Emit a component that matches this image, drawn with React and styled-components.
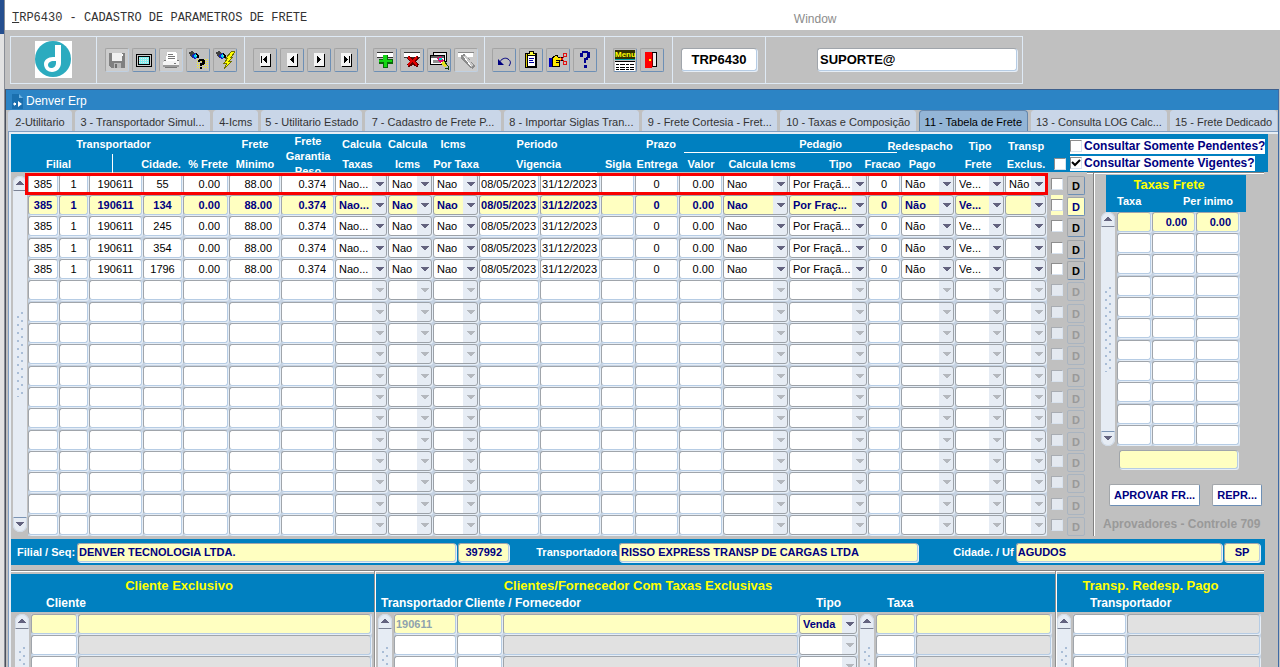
import React from "react";
import styled, { createGlobalStyle, css } from "styled-components";

//data
const tabs = [
  { label: "2-Utilitario", size: 63 },
  { label: "3 - Transportador Simul...", size: 136 },
  { label: "4-Icms", size: 44 },
  { label: "5 - Utilitario Estado", size: 101 },
  { label: "7 - Cadastro de Frete P...", size: 136 },
  { label: "8 - Importar Siglas Tran...", size: 136 },
  { label: "9 - Frete Cortesia - Fret...", size: 136 },
  { label: "10 - Taxas e Composição", size: 136 },
  { label: "11 - Tabela de Frete", size: 109, active: true },
  { label: "13 - Consulta LOG Calc...", size: 137 },
  { label: "15 - Frete Dedicado", size: 107 },
];

const freteColumns = [
  { name: "Filial", width: 31, align: "center" },
  { name: "Sequencia", width: 30, align: "center" },
  { name: "Transportador", width: 54, align: "center" },
  { name: "Cidade", width: 40, align: "center" },
  { name: "% Frete", width: 46, align: "right" },
  { name: "Frete Minimo", width: 52, align: "right" },
  { name: "Frete Garantia Peso", width: 54, align: "right" },
  { name: "Calcula Taxas", width: 53, select: true },
  { name: "Calcula Icms", width: 45, select: true },
  { name: "Icms Por Taxa", width: 46, select: true },
  { name: "Vigencia inicial", width: 61 },
  { name: "Vigencia final", width: 61 },
  { name: "Sigla", width: 34 },
  { name: "Prazo Entrega", width: 44, align: "center" },
  { name: "Pedagio Valor", width: 44, align: "right" },
  { name: "Pedagio Calcula Icms", width: 66, select: true },
  { name: "Pedagio Tipo", width: 79, select: true },
  { name: "Pedagio Fracao", width: 33, align: "center" },
  { name: "Redespacho Pago", width: 54, select: true },
  { name: "Tipo Frete", width: 50, select: true },
  { name: "Transp Exclusivo", width: 42, select: true },
];

const freteRow = (cidade, exclusivo, fracao = "Por Fraçã...") => [
  "385", "1", "190611", cidade, "0.00", "88.00", "0.374",
  "Nao...", "Nao", "Nao", "08/05/2023", "31/12/2023", "", "0", "0.00",
  "Nao", fracao, "0", "Não", "Ve...", exclusivo,
];

const freteRows = [
  freteRow("55", "Não"),
  freteRow("134", "", "Por Fraç..."),
  freteRow("245", ""),
  freteRow("354", ""),
  freteRow("1796", ""),
  ...Array.from({ length: 12 }, () => null),
];

const taxaColumns = [
  { name: "Taxa", width: 35 },
  { name: "Percentual", width: 44, align: "right" },
  { name: "Minimo", width: 44, align: "right" },
];

const clienteColumns = [
  { name: "Cliente", width: 47 },
  { name: "Nome do cliente", width: 294, locked: true },
];

const fornecedorColumns = [
  { name: "Transportador", width: 63 },
  { name: "Cliente / Fornecedor", width: 46 },
  { name: "Nome do fornecedor", width: 296, locked: true },
  { name: "Tipo", width: 59, select: true },
];

const taxaExclusivaColumns = [
  { name: "Taxa", width: 40 },
  { name: "Descricao da taxa", width: 136, locked: true },
];

const redespachoColumns = [
  { name: "Transportador", width: 54 },
  { name: "Nome do transportador", width: 134, locked: true },
];

function ScrollBar() {
  return (
    <ScrollTrack>
      <ScrollButton aria-label="Subir" $up>
        <svg width="8" height="5" viewBox="0 0 8 5" shapeRendering="crispEdges">
          <path d="M3 0h2v1h1v1h1v1h1v1H0V3h1V2h1V1h1z" fill="#63637f" />
        </svg>
      </ScrollButton>
      <Grip />
      <ScrollButton aria-label="Descer">
        <svg width="8" height="5" viewBox="0 0 8 5" shapeRendering="crispEdges">
          <path d="M0 0h8v1H7v1H6v1H5v1H3V3H2V2H1V1H0z" fill="#63637f" />
        </svg>
      </ScrollButton>
    </ScrollTrack>
  );
}

function GridCell({ column, value, current, off, faded }) {
  return (
    <Cell>
      {column.select ? (
        <CellSelect
          aria-label={column.name}
          defaultValue={value}
          disabled={off}
          $current={current}
        >
          <option>{value}</option>
        </CellSelect>
      ) : (
        <CellInput
          aria-label={column.name}
          defaultValue={value}
          $align={column.align}
          $current={current}
          $locked={column.locked}
          $faded={faded}
        />
      )}
    </Cell>
  );
}

function SimpleGrid({ label, columns, rows, current = 0, faded }) {
  return (
    <GridTable aria-label={label}>
      <colgroup>
        {columns.map((column) => (
          <Col key={column.name} $width={column.width} />
        ))}
      </colgroup>
      <tbody>
        {rows.map((row, i) => (
          <GridRow key={i}>
            {columns.map((column, c) => (
              <GridCell
                key={column.name}
                column={column}
                value={row ? row[c] : ""}
                current={i === current}
                off={!row}
                faded={faded && !column.select}
              />
            ))}
          </GridRow>
        ))}
      </tbody>
    </GridTable>
  );
}

function FreteGrid() {
  return (
    <FreteWrapper>
      <GridTable aria-label="Tabela de Frete">
        <colgroup>
          {freteColumns.map((column) => (
            <Col key={column.name} $width={column.width} />
          ))}
          <Col $width={20} />
          <Col $width={20} />
        </colgroup>
        <thead>
          <tr>
            <Head colSpan={4} $indent={16}><span>Transportador</span></Head>
            <Head />
            <Head><span>Frete</span></Head>
            <Head rowSpan={2}>
              <Stacked>Frete Garantia Peso</Stacked>
            </Head>
            <Head><span>Calcula</span></Head>
            <Head $trim={6}><span>Calcula</span></Head>
            <Head $trim={6}><span>Icms</span></Head>
            <Head colSpan={2} $trim={6}><span>Periodo</span></Head>
            <Head />
            <Head $indent={8}><span>Prazo</span></Head>
            <Head colSpan={4} $indent={4}>
              <Underlined $indent={60}>Pedagio</Underlined>
            </Head>
            <Head $low $trim={16}><span>Redespacho</span></Head>
            <Head $low><span>Tipo</span></Head>
            <Head $low><span>Transp</span></Head>
            <Head />
            <Head rowSpan={2}>
              <Filters>
                <Filter>
                  <Tick type="checkbox" />
                  Consultar Somente Pendentes?
                </Filter>
                <Filter>
                  <Tick type="checkbox" defaultChecked />
                  Consultar Somente Vigentes?
                </Filter>
              </Filters>
            </Head>
          </tr>
          <tr>
            <Head colSpan={2}><span>Filial</span></Head>
            <Head><Divider /></Head>
            <Head $trim={4}><span>Cidade.</span></Head>
            <Head $indent={4}><span>% Frete</span></Head>
            <Head><span>Minimo</span></Head>
            <Head $trim={8}><span>Taxas</span></Head>
            <Head $trim={6}><span>Icms</span></Head>
            <Head><span>Por Taxa</span></Head>
            <Head colSpan={2}><Underlined>Vigencia</Underlined></Head>
            <Head><span>Sigla</span></Head>
            <Head><span>Entrega</span></Head>
            <Head><span>Valor</span></Head>
            <Head $indent={12}><span>Calcula Icms</span></Head>
            <Head $indent={24}><span>Tipo</span></Head>
            <Head $trim={4}><span>Fracao</span></Head>
            <Head $trim={12}><span>Pago</span></Head>
            <Head $trim={4}><span>Frete</span></Head>
            <Head><span>Exclus.</span></Head>
            <Head $indent={7}>
              <Tick type="checkbox" aria-label="Marcar todos" />
            </Head>
          </tr>
        </thead>
        <tbody>
          {freteRows.map((row, i) => (
            <GridRow key={i}>
              {freteColumns.map((column, c) => (
                <GridCell
                  key={column.name}
                  column={column}
                  value={row ? row[c] : ""}
                  current={i === 1}
                  off={!row}
                />
              ))}
              <TickCell $current={i === 1}>
                <Tick type="checkbox" aria-label="Marcar linha" disabled={!row} />
              </TickCell>
              <TickCell>
                <DetailButton disabled={!row} $current={i === 1}>D</DetailButton>
              </TickCell>
            </GridRow>
          ))}
        </tbody>
      </GridTable>
      <Highlight />
    </FreteWrapper>
  );
}

//icons
const Icon = ({ children }) => (
  <svg width="20" height="20" viewBox="0 0 20 20" shapeRendering="crispEdges">
    {children}
  </svg>
);

const SaveIcon = () => (
  <Icon>
    <path d="M2 3h16v15H4l-2-2z" fill="#808080" />
    <path d="M5 3h10v8H5z" fill="#f0f0f0" />
    <path d="M15 4h1v2h-1z" fill="#fff" />
    <path d="M7 13h7v5H7z" fill="#b8b8b8" />
    <path d="M8 14h2v4H8z" fill="#707070" />
  </Icon>
);

const ScreenIcon = () => (
  <Icon>
    <rect x="2" y="4" width="16" height="13" fill="#000" />
    <rect x="3" y="5" width="14" height="11" fill="#c8c8c8" />
    <rect x="4" y="6" width="12" height="9" fill="#000" />
    <rect x="5" y="7" width="10" height="7" fill="#7ff0f0" />
    <path d="M5 8.500h10M5 10.500h10M5 12.500h10" stroke="#f4dede" strokeDasharray="1 1" />
  </Icon>
);

const PrintIcon = () => (
  <Icon>
    <path d="M6 2h8l2 2v7H5z" fill="#fff" />
    <path d="M7 4.500h5M7 6.500h7M7 8.500h7" stroke="#777" />
    <path d="M3 11h15v4H2v-3z" fill="#f4f4f4" />
    <path d="M2 15h16v2H2z" fill="#9a9a9a" />
    <path d="M3 10.500h2M16 10.500h2M4 17.500h12" stroke="#777" />
    <path d="M13 13h2v1h-2z" fill="#777" />
  </Icon>
);

const Torch = () => (
  <>
    <path d="M1 2l3-1 3 2 2 2-5 3-2-2z" fill="#404040" />
    <path d="M3 6l5-3 1 5-3 1z" fill="#1020c8" />
    <path d="M5 6l3-2 1 3-2 1z" fill="#00d8e8" />
    <path d="M8 2l3 4v2H9z" fill="#000" />
  </>
);

const EnterQueryIcon = () => (
  <Icon>
    <Torch />
    <path d="M9 9.500h11M9 11.500h11M9 13.500h11M9 15.500h11M9 17.500h11" stroke="#f4ec30" strokeDasharray="1 1" />
    <path d="M10 11v-1h1V9h5v1h1v4h-1v1h-2v1h-2v-3h2v-2h-2v1h-2zM12 17h2v2h-2z" fill="#000" />
  </Icon>
);

const ExecuteQueryIcon = () => (
  <Icon>
    <Torch />
    <path d="M17 1l-6 7h2l-4 5h3l-3 6 8-8h-3l4-4h-2l4-5z" fill="#ffff00" stroke="#707000" />
  </Icon>
);

const RecordIcon = ({ bar, left }) => (
  <Icon>
    <path d="M6 4h10v13H6z" fill="#000" />
    <path d="M5 3h10v13H5z" fill="#f4f4f4" />
    <path d={left ? "M12 6v7h-1v-1h-1v-1H9v-1H8V9h1V8h1V7h1V6z" : "M8 6v7h1v-1h1v-1h1v-1h1V9h-1V8h-1V7H9V6z"} fill="#000" />
    {bar && <path d={left ? "M6 6h1v7H6z" : "M13 6h1v7h-1z"} fill="#000" />}
  </Icon>
);

const InsertIcon = () => (
  <Icon>
    <path d="M2 3h16v4H2z" fill="#fff" />
    <path d="M2 2.500h16M2 7.500h16" stroke="#333" />
    <path d="M8 5h5v4h5v5h-5v4H8v-4H4V9h4z" fill="#086808" />
    <path d="M8 5h4v5h5v2h-5v5H9v-5H4v-2h4z" fill="#14d814" />
  </Icon>
);

const RemoveIcon = () => (
  <Icon>
    <path d="M2 3h16v4H2z" fill="#fff" />
    <path d="M2 2.500h16M2 7.500h16" stroke="#333" />
    <path d="M6 7l10 9M16 7L6 16" stroke="#600000" strokeWidth="4" />
    <path d="M6 7l9 8M15 7l-9 8" stroke="#e00000" strokeWidth="2" />
  </Icon>
);

const LockIcon = () => (
  <Icon>
    <path d="M4.500 2.500h13v9h-13z" fill="#eee" stroke="#000" />
    <path d="M1.500 5.500h14v9h-14z" fill="#fff" stroke="#000" />
    <path d="M2 6h13v2H2z" fill="#606060" />
    <path d="M4 10h7v3H4z" fill="#909090" />
    <path d="M8 8l4-2 3 5-4 2z" fill="#e01070" />
    <path d="M10 8h3v2h-3z" fill="#00d8d0" />
    <path d="M12 13l3-2 3 4-2 3z" fill="#e8e020" />
    <path d="M15 11l4 5v3l-3-1" fill="none" stroke="#104010" />
  </Icon>
);

const ClearIcon = () => (
  <Icon>
    <path d="M2 3h15v4H2z" fill="#fff" />
    <path d="M2 2.500h16" stroke="#888" />
    <path d="M5 5l4-1 10 12-2 3-3-1-9-9z" fill="#8c8c8c" />
    <path d="M7 6l3-1 7 10-2 2z" fill="#c8c8c8" />
    <path d="M8 7l7 9" stroke="#fff" />
  </Icon>
);

const UndoIcon = () => (
  <svg width="20" height="20" viewBox="0 0 20 20">
    <path d="M5 13c2-4 6-6 9-4 3 2 3 4 1 7" fill="none" stroke="#000080" strokeWidth="1" />
    <path d="M4 9v6h6z" fill="#000080" />
  </svg>
);

const ClipboardIcon = () => (
  <Icon>
    <path d="M4.500 3.500h11v14h-11z" fill="#d8c800" stroke="#000" />
    <path d="M6 5h8v11H6z" fill="#fff" stroke="#000" />
    <path d="M8 1h4v2h2v2H6V3h2z" fill="#ffff40" stroke="#000" />
    <path d="M8 8.500h5M8 10.500h4M8 12.500h5" stroke="#0000a0" />
  </Icon>
);

const CutIcon = () => (
  <Icon>
    <path d="M1 8h3v9H1z" fill="#0000c0" />
    <path d="M4 8l5-3 1 2h4v3h-3v6H4z" fill="#ffe800" stroke="#000" />
    <path d="M8 10.500h4M8 12.500h4" stroke="#000" />
    <circle cx="17" cy="5" r="2" fill="none" stroke="#e01010" />
    <circle cx="17" cy="13" r="2" fill="none" stroke="#e01010" />
    <path d="M12 7l4 4M12 11l4-4" stroke="#e01010" />
  </Icon>
);

const HelpIcon = () => (
  <Icon>
    <path d="M5 7V3h2V1h6v1h2v6h-2v2h-2v3H9V8h2V7h1V3H8v4zM9 15h3v3H9z" fill="#000090" />
  </Icon>
);

const MenuIcon = () => (
  <svg width="22" height="22" viewBox="0 0 22 22">
    <path d="M1 1h20v9H1z" fill="#303000" />
    <text x="1" y="8" fontFamily="Liberation Sans, sans-serif" fontSize="8" fontWeight="700" fill="#ffff00">Menu</text>
    <path d="M1 10h20v1H1z" fill="#00a0a0" />
    <path d="M1 12h20v10H1z" fill="#fff" />
    <path d="M1 12.500h20" stroke="#000" />
    <path d="M2 15.500h18M2 18.500h18M2 20.500h18" stroke="#000" strokeDasharray="3 1 5 1" />
  </svg>
);

const ExitIcon = () => (
  <Icon>
    <path d="M5.500 2.500h9v14h-9z" fill="#eee" stroke="#000" />
    <path d="M3 2h7v16H3z" fill="#ff0000" />
    <path d="M10 3h1v14h-1z" fill="#700000" />
    <path d="M7 9h2v2H7z" fill="#ffff00" />
  </Icon>
);

const ToolButton = ({ label, off, icon }) => (
  <Tool aria-label={label} $off={off}>{icon}</Tool>
);

function Toolbar() {
  return (
    <ToolArea>
      <ToolStrip>
        <Section $width={85}>
          <svg width="37" height="37" viewBox="0 0 37 37" role="img" aria-label="Denver">
            <path d="M0 0h37v37H0z" fill="#fff" />
            <circle cx="18" cy="18" r="18" fill="#2babbf" />
            <path d="M20 4h6v18c0 5-4 9-9 9-4 0-8-3-8-8 0-4 4-7 9-7h2zm-1 16c-4 0-6 2-6 4 0 1 1 3 3 3 3 0 5-2 5-5v-2z" fill="#fff" />
          </svg>
        </Section>
        <Section $width={148}>
          <ToolButton label="Salvar" off icon={<SaveIcon />} />
          <ToolButton label="Tela" icon={<ScreenIcon />} />
          <ToolButton label="Imprimir" off icon={<PrintIcon />} />
          <ToolButton label="Entrar consulta" icon={<EnterQueryIcon />} />
          <ToolButton label="Executar consulta" icon={<ExecuteQueryIcon />} />
        </Section>
        <Section $width={121}>
          <ToolButton label="Primeiro" icon={<RecordIcon bar left />} />
          <ToolButton label="Anterior" icon={<RecordIcon left />} />
          <ToolButton label="Proximo" icon={<RecordIcon />} />
          <ToolButton label="Ultimo" icon={<RecordIcon bar />} />
        </Section>
        <Section $width={119}>
          <ToolButton label="Inserir" icon={<InsertIcon />} />
          <ToolButton label="Remover" icon={<RemoveIcon />} />
          <ToolButton label="Bloquear" icon={<LockIcon />} />
          <ToolButton label="Limpar" off icon={<ClearIcon />} />
        </Section>
        <Section $width={120}>
          <ToolButton label="Desfazer" icon={<UndoIcon />} />
          <ToolButton label="Lista" icon={<ClipboardIcon />} />
          <ToolButton label="Recortar" icon={<CutIcon />} />
          <ToolButton label="Ajuda" icon={<HelpIcon />} />
        </Section>
        <Section $width={68}>
          <ToolButton label="Menu" icon={<MenuIcon />} />
          <ToolButton label="Sair" icon={<ExitIcon />} />
        </Section>
        <Section $width={93}>
          <ToolField aria-label="Programa" defaultValue="TRP6430" $width={76} $align="center" />
        </Section>
        <Section $width={257} $end>
          <ToolField aria-label="Usuario" defaultValue="SUPORTE@" $width={200} />
        </Section>
      </ToolStrip>
    </ToolArea>
  );
}

function App() {
  return (
    <>
      <GlobalStyle />
      <Page>
        <Desktop />
        <Main>
          <TitleBar>
            <h1><u>T</u>RP6430 - CADASTRO DE PARAMETROS DE FRETE</h1>
            <span>Window</span>
          </TitleBar>
          <Toolbar />
          <Frame>
            <FrameTitle>
              <svg width="12" height="15" viewBox="0 0 12 15">
                <path d="M1 0h7l4 4v11H1z" fill="#1a6fae" />
                <path d="M8 0v4h4z" fill="#6fb4e4" />
                <path d="M2 10l2-2v1h1v2H4v1zM7 7l4 3-4 3z" fill="#fff" />
              </svg>
              Denver Erp
            </FrameTitle>
            <Tabs role="tablist">
              {tabs.map((tab) => (
                <Tab
                  key={tab.label}
                  role="tab"
                  aria-selected={!!tab.active}
                  $size={tab.size}
                  $active={tab.active}
                >
                  {tab.label}
                </Tab>
              ))}
            </Tabs>
            <Pane>
              <FreteBlock>
                <FreteScroll>
                  <ScrollBar />
                </FreteScroll>
                <FreteGrid />
                <SideColumn>
                  <Side>
                    <TaxasHead>
                      <h2>Taxas Frete</h2>
                      <TaxasLabels>
                        <span>Taxa</span>
                        <span>Per inimo</span>
                      </TaxasLabels>
                    </TaxasHead>
                    <TaxasBody>
                      <ScrollBar />
                      <SimpleGrid
                        label="Taxas Frete"
                        columns={taxaColumns}
                        rows={[["", "0.00", "0.00"], ...Array(10).fill(null)]}
                      />
                    </TaxasBody>
                    <TaxaNome aria-label="Nome da taxa" />
                    <Actions>
                      <ActionButton>APROVAR FR...</ActionButton>
                      <ActionButton>REPR...</ActionButton>
                    </Actions>
                    <Note>Aprovadores - Controle 709</Note>
                  </Side>
                </SideColumn>
              </FreteBlock>
              <Summary>
                <SummaryGroup $grow={491}>
                  <label htmlFor="filial">Filial / Seq:</label>
                  <SummaryField id="filial" defaultValue="DENVER TECNOLOGIA LTDA." />
                  <SummaryField aria-label="Sequencia" defaultValue="397992" $width={51} />
                </SummaryGroup>
                <SummaryGroup $grow={381}>
                  <label htmlFor="transportadora">Transportadora</label>
                  <SummaryField id="transportadora" defaultValue="RISSO EXPRESS TRANSP DE CARGAS LTDA" />
                </SummaryGroup>
                <SummaryGroup $grow={306}>
                  <label htmlFor="cidade">Cidade. / Uf</label>
                  <SummaryField id="cidade" defaultValue="AGUDOS" />
                  <SummaryField aria-label="Uf" defaultValue="SP" $width={36} />
                </SummaryGroup>
              </Summary>
              <Panels>
                <Panel>
                  <PanelHead $left={35}>
                    <h2>Cliente Exclusivo</h2>
                    <PanelLabels><span>Cliente</span></PanelLabels>
                  </PanelHead>
                  <PanelBody $inset={4}>
                    <ScrollBar />
                    <SimpleGrid label="Cliente Exclusivo" columns={clienteColumns} rows={[["", ""], ...Array(6).fill(null)]} />
                  </PanelBody>
                </Panel>
                <Panel>
                  <PanelHead $left={5} $right={156}>
                    <h2>Clientes/Fornecedor Com Taxas Exclusivas</h2>
                    <PanelLabels $columns="84px 351px 71px 1fr">
                      <span>Transportador</span>
                      <span>Cliente / Fornecedor</span>
                      <span>Tipo</span>
                      <span>Taxa</span>
                    </PanelLabels>
                  </PanelHead>
                  <PanelBody $inset={2}>
                    <ScrollBar />
                    <SimpleGrid
                      label="Clientes com taxas exclusivas"
                      columns={fornecedorColumns}
                      rows={[["190611", "", "", "Venda"], ...Array(6).fill(null)]}
                      faded
                    />
                    <ScrollBar />
                    <SimpleGrid label="Taxas exclusivas" columns={taxaExclusivaColumns} rows={[["", ""], ...Array(6).fill(null)]} />
                  </PanelBody>
                </Panel>
                <Panel>
                  <PanelHead $left={33} $right={20}>
                    <h2>Transp. Redesp. Pago</h2>
                    <PanelLabels><span>Transportador</span></PanelLabels>
                  </PanelHead>
                  <PanelBody $inset={0}>
                    <ScrollBar />
                    <SimpleGrid
                      label="Transportador de redespacho"
                      columns={redespachoColumns}
                      rows={Array(7).fill(null)}
                      current={-1}
                    />
                  </PanelBody>
                </Panel>
              </Panels>
            </Pane>
          </Frame>
        </Main>
      </Page>
    </>
  );
}

export default App;

const GlobalStyle = createGlobalStyle`
  * {
    box-sizing: border-box;
  }

  body {
    margin: 0;
    height: 100vh;
    overflow: hidden;
    background: #c0c0c0;
    font-family: "Liberation Sans", Arial, sans-serif;
    font-size: 11px;
  }

  h1, h2, p {
    margin: 0;
  }

  button, input, select {
    margin: 0;
    font: inherit;
  }

  svg {
    display: block;
    flex: none;
  }
`;

const blue = "#0080c0";
const yellow = "#ffffc1";
const navy = "#000080";

const Page = styled.div`
  display: flex;
  height: 100vh;
  overflow: hidden;
`;

const Desktop = styled.div`
  width: 5px;
  flex: none;
  border-right: 1px solid #8a8e96;
  background: linear-gradient(#254f8f 34px, #e2e2e2 34px);
`;

const Main = styled.main`
  flex: 1;
  min-width: 0;
`;

const TitleBar = styled.header`
  height: 30px;
  padding: 5px 7px 0;
  display: grid;
  grid-template-columns: 62% 1fr;
  align-items: center;
  background: #fff;

  h1 {
    font-family: "Liberation Mono", "Courier New", monospace;
    font-size: 12px;
    font-weight: 400;
    color: #333;
  }

  span {
    font-size: 12px;
    color: #8c8c8c;
    padding-top: 2px;
  }
`;

const ToolArea = styled.div`
  height: 59px;
  padding: 6px 5px;
`;

const ToolStrip = styled.div`
  display: inline-flex;
  height: 48px;
  border: 1px solid #dfeaf5;
`;

const Section = styled.div`
  width: ${(p) => p.$width}px;
  display: flex;
  align-items: center;
  justify-content: ${(p) => (p.$end ? "flex-end" : "center")};
  gap: 3px;
  padding: 0 ${(p) => (p.$end ? 5 : 0)}px 1px 0;

  & + & {
    border-left: 1px solid #dfeaf5;
  }
`;

const Tool = styled.button`
  width: 24px;
  height: 24px;
  padding: 0;
  display: flex;
  align-items: center;
  justify-content: center;
  border: 1px solid #a4a4a4;
  border-right-color: ${(p) => (p.$off ? "#c0d0e2" : "#6d8fb5")};
  border-bottom-color: ${(p) => (p.$off ? "#c0d0e2" : "#6d8fb5")};
  border-radius: 2px;
  background: ${(p) => (p.$off ? "#cccccc" : "#c0c0c0")};
`;

const field = css`
  display: block;
  min-width: 0;
  border: 1px solid #a0a5ab;
  border-right-color: #b6cce4;
  border-bottom-color: #b6cce4;
  border-radius: 3px;
  box-shadow: 1px 1px 0 #e6eef7;
  outline: none;
`;

const ToolField = styled.input`
  ${field}
  width: ${(p) => p.$width}px;
  height: 23px;
  padding: 0 2px;
  text-align: ${(p) => p.$align || "left"};
  font-size: 13px;
  font-weight: 700;
  color: #000;
  background: #fff;
`;

const Frame = styled.section`
  margin-right: 1px;
  border-top: 1px solid #3d5f8c;
  border-left: 1px solid #4a505c;
  border-right: 1px solid #3f6aa5;
`;

const FrameTitle = styled.div`
  height: 20px;
  padding: 2px 5px 0;
  display: flex;
  align-items: center;
  gap: 3px;
  font-size: 12px;
  color: #fff;
  background: #2c84c5;
`;

const Tabs = styled.div`
  height: 21px;
  padding: 0 1px 0 2px;
  display: flex;
  gap: 3px;
`;

const Tab = styled.button`
  flex: ${(p) => p.$size} 1 0;
  padding: 2px 0 0;
  white-space: nowrap;
  text-align: center;
  border: 1px solid ${(p) => (p.$active ? "#6486ab" : "#c9d6e8")};
  border-bottom: 0;
  border-radius: 4px 4px 0 0;
  color: ${(p) => (p.$active ? "#000" : "#333")};
  background: ${(p) => (p.$active ? "#93b5d6" : "#c9d6e8")};
`;

const Pane = styled.div`
  margin-left: 2px;
  padding: 2px 10px 0 2px;
  border-top: 1px solid #7f9dc0;
  border-left: 1px solid #7f9dc0;
  box-shadow: inset 2px 2px 0 #e6edf5;
`;

const FreteBlock = styled.div`
  display: flex;
  background: linear-gradient(${blue} 38px, transparent 38px);
`;

const FreteScroll = styled.div`
  width: 17px;
  flex: none;
  padding: 42px 1px 4px 2px;
  display: flex;
`;

const ScrollTrack = styled.div`
  width: 14px;
  flex: none;
  display: flex;
  flex-direction: column;
  align-items: center;
  justify-content: space-between;
  background: #e6ecf4;
  border-radius: 7px;
`;

const ScrollButton = styled.button`
  width: 14px;
  height: 15px;
  padding: 0;
  display: flex;
  align-items: center;
  justify-content: center;
  border: 1px solid #d0dbe8;
  border-bottom-color: ${(p) => (p.$up ? "#7b8294" : "#d0dbe8")};
  border-top-color: ${(p) => (p.$up ? "#d0dbe8" : "#7b94b4")};
  border-radius: ${(p) => (p.$up ? "7px 7px 0 0" : "0 0 7px 7px")};
  background: #e6ecf4;
`;

const Grip = styled.div`
  width: 8px;
  flex: 0 1 86px;
  background:
    radial-gradient(circle at 2px 6px, #a9bdd6 1px, transparent 1px) 0 0 / 8px 8px,
    radial-gradient(circle at 6px 2px, #a9bdd6 1px, transparent 1px) 0 0 / 8px 8px;
`;

const FreteWrapper = styled.div`
  position: relative;
  flex: none;
`;

// marks the first line of the grid
const Highlight = styled.div`
  position: absolute;
  top: 39px;
  left: -3px;
  width: 1023px;
  height: 22px;
  border: 3px solid #f80000;
  pointer-events: none;
`;

const GridTable = styled.table`
  table-layout: fixed;
  align-self: flex-start;
  border-spacing: 0;
  width: 1px;
`;

const Col = styled.col`
  width: ${(p) => p.$width}px;
`;

const Head = styled.th`
  height: 20px;
  padding: 0 ${(p) => p.$trim || 0}px 0 ${(p) => p.$indent || 0}px;
  font-size: 11px;
  line-height: 16px;
  white-space: nowrap;
  color: #fff;
  vertical-align: ${(p) => (p.$low ? "bottom" : "middle")};

  > span {
    display: flex;
    justify-content: center;
  }
`;

const Stacked = styled.div`
  height: 38px;
  margin-bottom: 2px;
  overflow: hidden;
  line-height: 15px;
  white-space: normal;
`;

const Underlined = styled.div`
  margin: 0 4px 0 1px;
  padding-left: ${(p) => p.$indent || 0}px;
  border-bottom: 1px solid #fff;
`;

const Divider = styled.div`
  width: 1px;
  height: 20px;
  margin-left: 23px;
  background: #fff;
`;

const Filters = styled.div`
  width: 200px;
  padding: 3px 0 2px 3px;
  display: flex;
  flex-direction: column;
  align-items: flex-start;
  gap: 2px;
`;

const Filter = styled.label`
  display: flex;
  align-items: center;
  gap: 2px;
  font-size: 12px;
  line-height: 15px;
  color: ${navy};
  background: #fff;
`;

const Tick = styled.input`
  appearance: none;
  display: block;
  width: 12px;
  height: 12px;
  border: 1px solid #8e8e8e;
  border-right-color: #d8e2ee;
  border-bottom-color: #d8e2ee;
  background: #fff;

  &:checked {
    background: #fff
      url("data:image/svg+xml,%3Csvg xmlns='http://www.w3.org/2000/svg' viewBox='0 0 10 10'%3E%3Cpath d='M1 4l3 3 5-5' fill='none' stroke='%23000' stroke-width='2'/%3E%3C/svg%3E");
  }

  &:disabled {
    background: #e4e9f0;
    border-color: #a8acb2;
    border-right-color: #d8e2ee;
    border-bottom-color: #d8e2ee;
  }
`;

const GridRow = styled.tr`
  height: 21px;

  &:nth-child(3n) {
    height: 22px;
  }
`;

const Cell = styled.td`
  padding: 0;
  vertical-align: top;
  background: #c6d3e3;
`;

const CellInput = styled.input`
  ${field}
  width: calc(100% - 1px);
  height: 20px;
  padding: 0 ${(p) => (p.$align === "right" ? 7 : 1)}px;
  text-align: ${(p) => p.$align || "left"};
  font-weight: ${(p) => (p.$current ? 700 : 400)};
  color: ${(p) => (p.$current ? (p.$faded ? "#8fa3ae" : navy) : "#000")};
  background: ${(p) => (p.$current ? yellow : p.$locked ? "#e1e1e1" : "#fff")};
`;

const arrow = (color) => css`
  background-image: url("data:image/svg+xml,%3Csvg xmlns='http://www.w3.org/2000/svg' width='14' height='18' shape-rendering='crispEdges'%3E%3Cpath d='M0 0h14v18H0z' fill='%23e6ecf4'/%3E%3Cpath d='M4 7h8v1h-1v1h-1v1H9v1H7v-1H6V9H5V8H4z' fill='%23${color}'/%3E%3C/svg%3E");
`;

const CellSelect = styled.select`
  ${field}
  appearance: none;
  width: calc(100% - 1px);
  height: 20px;
  padding: 0 14px 0 3px;
  border-color: #9ba1a8;
  font-weight: ${(p) => (p.$current ? 700 : 400)};
  color: ${(p) => (p.$current ? navy : "#000")};
  background: ${(p) => (p.$current ? yellow : "#fff")} no-repeat right center;
  ${arrow("63637f")}

  &:disabled {
    opacity: 1;
    ${arrow("b4b8be")}
  }
`;

const TickCell = styled.td`
  padding: 0;
  vertical-align: top;

  ${Tick} {
    margin: 4px 0 0 4px;
    box-shadow: ${(p) => (p.$current ? `0 -4px 0 ${yellow}, 0 4px 0 ${yellow}` : "none")};
  }
`;

const DetailButton = styled.button`
  width: 18px;
  height: 19px;
  margin-top: 2px;
  padding: 0;
  display: block;
  font-weight: 700;
  border: 1px solid #a2a6aa;
  border-right-color: #6d8fb5;
  border-bottom-color: #6d8fb5;
  border-radius: 2px;
  color: ${(p) => (p.$current ? navy : "#000")};
  background: ${(p) => (p.$current ? yellow : "#c0c0c0")};

  &:disabled {
    color: #999;
    border-color: #a9b4c0;
  }
`;

const SideColumn = styled.div`
  flex: 1;
  margin-top: 38px;
  margin-right: 4px;
  padding-left: 6px;
  border-top: 1px solid #808080;
  box-shadow: inset 0 1px 0 #fff;
  display: flex;
`;

const Side = styled.aside`
  flex: 1;
  padding: 2px 0 0 7px;
  border-left: 1px solid #808080;
  box-shadow: inset 1px 0 0 #fff;
`;

const TaxasHead = styled.div`
  width: 140px;
  height: 37px;
  margin-left: 5px;
  padding: 2px 13px 0 11px;
  background: ${blue};
  color: #fff;
  font-weight: 700;

  h2 {
    padding-right: 12px;
    font-size: 13px;
    line-height: 16px;
    text-align: center;
    color: #ff0;
  }
`;

const TaxasLabels = styled.div`
  display: flex;
  justify-content: space-between;
  line-height: 16px;
`;

const TaxasBody = styled.div`
  display: flex;
  gap: 2px;
`;

const TaxaNome = styled.input`
  ${field}
  width: 119px;
  height: 19px;
  margin: 4px 0 0 18px;
  background: ${yellow};
`;

const Actions = styled.div`
  margin: 15px 2px 0 8px;
  display: flex;
  justify-content: space-between;
`;

const ActionButton = styled.button`
  height: 22px;
  padding: 0 4px;
  font-weight: 700;
  border: 1px solid #a2a6aa;
  border-right-color: #6d8fb5;
  border-bottom-color: #6d8fb5;
  border-radius: 2px;
  color: ${navy};
  background: #fff;
`;

const Note = styled.p`
  margin: 10px 0 0 2px;
  font-size: 12px;
  line-height: 16px;
  font-weight: 700;
  white-space: nowrap;
  color: #999;
`;

const Summary = styled.div`
  height: 26px;
  margin: 3px 3px 0 0;
  padding: 0 5px 0 6px;
  display: flex;
  align-items: center;
  gap: 27px;
  color: #fff;
  font-weight: 700;
  background: ${blue};
`;

const SummaryGroup = styled.div`
  flex: ${(p) => p.$grow} 1 0;
  display: flex;
  align-items: center;
  gap: 2px;
  white-space: nowrap;

  &:last-child {
    margin-left: 8px;
  }
`;

const SummaryField = styled.input`
  ${field}
  flex: ${(p) => (p.$width ? "none" : "1")};
  width: ${(p) => (p.$width ? `${p.$width}px` : "auto")};
  height: 19px;
  padding: 0 1px;
  text-align: ${(p) => (p.$width ? "center" : "left")};
  font-weight: 700;
  color: ${navy};
  background: ${yellow};
`;

const Panels = styled.div`
  margin: 5px 4px 0 0;
  display: grid;
  grid-template-columns: 364px 681px 1fr;
  border-top: 1px solid #808080;
  box-shadow: inset 0 1px 0 #fff;
`;

const Panel = styled.section`
  min-width: 0;
  padding-top: 3px;

  & + & {
    border-left: 1px solid #fff;
    box-shadow: -1px 0 0 #909090;
  }
`;

const PanelHead = styled.div`
  height: 38px;
  padding: 3px 0 0 ${(p) => p.$left}px;
  color: #fff;
  font-weight: 700;
  background: ${blue};

  h2 {
    margin-left: -${(p) => p.$left}px;
    padding-right: ${(p) => p.$right || 28}px;
    font-size: 13px;
    line-height: 18px;
    text-align: center;
    color: #ff0;
  }
`;

const PanelLabels = styled.div`
  display: grid;
  grid-template-columns: ${(p) => p.$columns || "1fr"};
  font-size: 12px;
  line-height: 16px;
`;

const PanelBody = styled.div`
  padding: 2px 0 0 ${(p) => p.$inset}px;
  display: flex;
  gap: 2px;
`;
